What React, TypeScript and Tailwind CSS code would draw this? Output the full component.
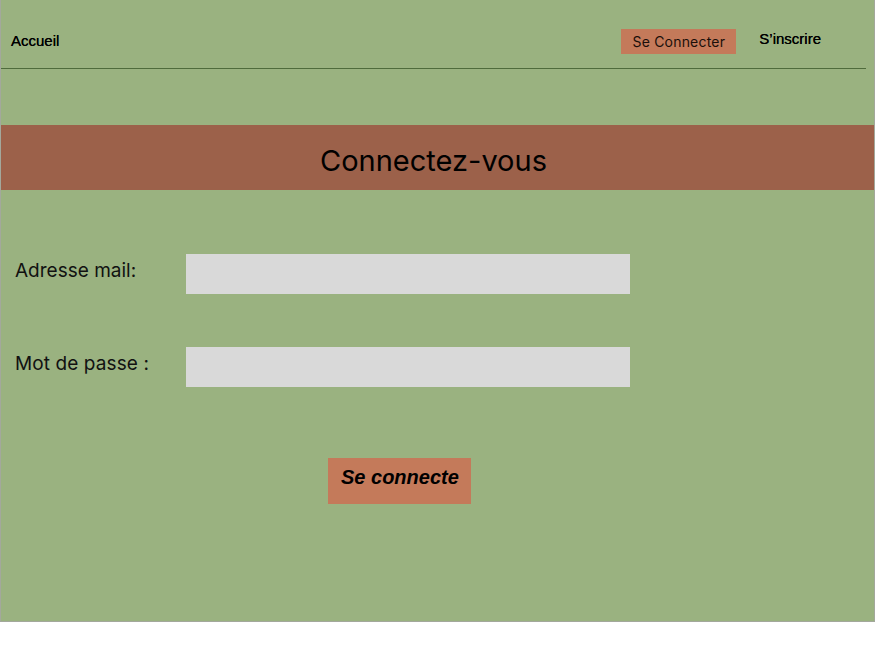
export default function App() {
  return (
    <div className="w-[875px] h-[648px] bg-white">
      <div className="h-[622px] bg-[#9AB280] border-l border-r border-b border-[#a3a89c] flex flex-col">
        <nav className="flex items-center h-[69px] pt-[14px] border-b border-[#4f6b3c] mr-[8px]">
          <a className="ml-[10px] text-[15px] text-black font-['Liberation_Sans',sans-serif] pt-[1px] [text-shadow:0_0_0.3px_black]">Accueil</a>
          <div className="ml-auto flex items-center">
            <button className="w-[115px] h-[25px] bg-[#C47A5A] text-[14px] text-[#1a0f0a] font-['Inter',sans-serif] tracking-[0.2px] pt-[1px]">
              Se Connecter
            </button>
            <a className="ml-[23px] mr-[45px] text-[15px] text-black font-['Liberation_Sans',sans-serif] -mt-[3px] [text-shadow:0_0_0.4px_black]">S’inscrire</a>
          </div>
        </nav>
        <div className="mt-[56px] h-[65px] bg-[#9C614A] flex items-center justify-center pt-[6px] pr-[8px]">
          <h1 className="text-[29px] text-black font-['Inter',sans-serif] font-normal">Connectez-vous</h1>
        </div>
        <form className="flex flex-col mt-[64px]">
          <div className="flex items-start">
            <label className="ml-[14px] w-[171px] text-[19px] text-[#111] font-['Inter',sans-serif] pt-[3px]">Adresse mail:</label>
            <input className="w-[444px] h-[40px] bg-[#D9D9D9] outline-none" />
          </div>
          <div className="flex items-start mt-[53px]">
            <label className="ml-[14px] w-[171px] text-[19px] text-[#111] font-['Inter',sans-serif] pt-[3px] tracking-[0.1px]">Mot de passe :</label>
            <input type="password" className="w-[444px] h-[40px] bg-[#D9D9D9] outline-none" />
          </div>
          <button
            type="button"
            className="ml-[327px] mt-[71px] w-[143px] h-[46px] bg-[#C47A5A] text-left pl-[13px] pb-[8px] text-[20px] italic font-bold text-black font-['Liberation_Sans',sans-serif]"
          >
            Se connecte
          </button>
        </form>
      </div>
    </div>
  );
}
